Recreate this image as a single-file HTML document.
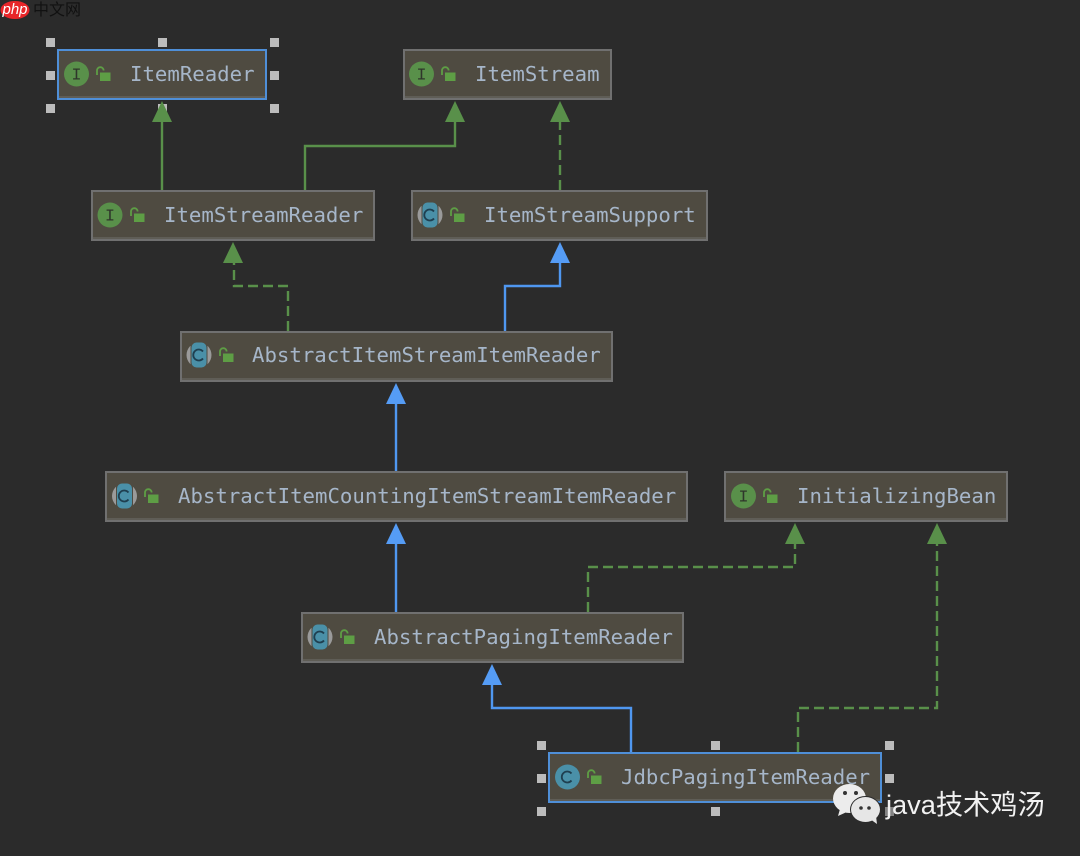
<!DOCTYPE html>
<html><head><meta charset="utf-8"><style>
html,body{margin:0;padding:0;background:#2b2b2b;width:1080px;height:856px;overflow:hidden}
svg{display:block}
.b{fill:#4f4b41;stroke:#707070;stroke-width:2}
.s{fill:#4f4b41;stroke:#4f8fd8;stroke-width:2}
.bb{fill:#5f5d56}
.t{font-family:"DejaVu Sans Mono","Liberation Mono",monospace;font-size:20.7px;fill:#a6b6c9}
.g{fill:none;stroke:#59904a;stroke-width:2.4}
.d{stroke-dasharray:10 5}
.l{fill:none;stroke:#4f97f0;stroke-width:2.4}
.h{fill:#bcbcbc}
.ic{font-family:"Liberation Mono",monospace;font-size:17px;fill:#2f362b;text-anchor:middle}
.main{filter:blur(.35px)}
</style></head><body>
<svg width="1080" height="856" viewBox="0 0 1080 856" xmlns="http://www.w3.org/2000/svg">
<defs>
<g id="I"><circle cx="0" cy="0" r="12.5" fill="#59904a"/><text class="ic" x="0" y="5.500">I</text></g>
<g id="C"><circle cx="0" cy="0" r="12.5" fill="#9a9a9a"/><rect x="-8.500" y="-13" width="17" height="26" fill="#4f4b41"/><rect x="-7.500" y="-12.500" width="15" height="25" rx="5" fill="#4a90a8"/><path d="M4 -3.500A5.500 5.500 0 1 0 4 3.500" fill="none" stroke="#1f3f50" stroke-width="1.800"/></g>
<g id="K"><circle cx="0" cy="0" r="12.5" fill="#4a90a8"/><path d="M4 -3.500A5.500 5.500 0 1 0 4 3.500" fill="none" stroke="#1f3f50" stroke-width="1.800"/></g>
<g id="L"><rect x="1" y="-1.500" width="10.500" height="8.500" fill="#5e9e45"/><path d="M-2 1V-3.500a3.300 3.300 0 0 1 6.600 0" fill="none" stroke="#5e9e45" stroke-width="1.800"/></g>
</defs>
<rect width="1080" height="856" fill="#2b2b2b"/>

<g class="main">
<!-- selection handles -->
<g class="h">
<rect x="46" y="38" width="9" height="9"/><rect x="158" y="38" width="9" height="9"/><rect x="270" y="38" width="9" height="9"/>
<rect x="46" y="71" width="9" height="9"/><rect x="270" y="71" width="9" height="9"/>
<rect x="46" y="104" width="9" height="9"/><rect x="158" y="104" width="9" height="9"/><rect x="270" y="104" width="9" height="9"/>
<rect x="537" y="741" width="9" height="9"/><rect x="711" y="741" width="9" height="9"/><rect x="885" y="741" width="9" height="9"/>
<rect x="537" y="774" width="9" height="9"/><rect x="885" y="774" width="9" height="9"/>
<rect x="537" y="807" width="9" height="9"/><rect x="711" y="807" width="9" height="9"/><rect x="885" y="807" width="9" height="9" opacity=".6"/>
</g>

<!-- connectors -->
<path class="g" d="M162 190V118"/>
<path class="g" d="M305 190V146H455V118"/>
<path class="g d" d="M560 190V118"/>
<path class="g d" d="M288 331V286H234V259"/>
<path class="l" d="M505 331V286H560V259"/>
<path class="l" d="M396 471V400"/>
<path class="l" d="M396 612V540"/>
<path class="g d" d="M588 612V567H795V540"/>
<path class="g d" d="M798 752V708H937V540"/>
<path class="l" d="M631 752V708H492V681"/>

<!-- arrows -->
<path d="M162 101L172 122H152Z" fill="#59904a"/>
<path d="M455 101L465 122H445Z" fill="#59904a"/>
<path d="M560 101L570 122H550Z" fill="#59904a"/>
<path d="M233 242L243 263H223Z" fill="#59904a"/>
<path d="M560 242L570 263H550Z" fill="#559cf5"/>
<path d="M396 383L406 404H386Z" fill="#559cf5"/>
<path d="M396 523L406 544H386Z" fill="#559cf5"/>
<path d="M795 523L805 544H785Z" fill="#59904a"/>
<path d="M937 523L947 544H927Z" fill="#59904a"/>
<path d="M492 664L502 685H482Z" fill="#559cf5"/>

<!-- boxes -->
<rect class="s" x="58" y="50" width="208" height="49"/>
<rect class="bb" x="59" y="96" width="206" height="2"/>
<use href="#I" x="76.500" y="74"/><use href="#L" x="99" y="74"/>
<text class="t" x="130" y="81">ItemReader</text>

<rect class="b" x="404" y="50" width="207" height="49"/>
<rect class="bb" x="405" y="96" width="205" height="2"/>
<use href="#I" x="421.500" y="74"/><use href="#L" x="444" y="74"/>
<text class="t" x="475" y="81">ItemStream</text>

<rect class="b" x="92" y="191" width="282" height="49"/>
<rect class="bb" x="93" y="237" width="280" height="2"/>
<use href="#I" x="110" y="215"/><use href="#L" x="133" y="215"/>
<text class="t" x="164" y="222">ItemStreamReader</text>

<rect class="b" x="412" y="191" width="295" height="49"/>
<rect class="bb" x="413" y="237" width="293" height="2"/>
<use href="#C" x="430" y="215"/><use href="#L" x="453" y="215"/>
<text class="t" x="484" y="222">ItemStreamSupport</text>

<rect class="b" x="181" y="332" width="431" height="49"/>
<rect class="bb" x="182" y="378" width="429" height="2"/>
<use href="#C" x="199" y="355"/><use href="#L" x="222" y="355"/>
<text class="t" x="252" y="362">AbstractItemStreamItemReader</text>

<rect class="b" x="106" y="472" width="581" height="49"/>
<rect class="bb" x="107" y="518" width="579" height="2"/>
<use href="#C" x="124.500" y="496"/><use href="#L" x="147" y="496"/>
<text class="t" x="178" y="503">AbstractItemCountingItemStreamItemReader</text>

<rect class="b" x="725" y="472" width="282" height="49"/>
<rect class="bb" x="726" y="518" width="280" height="2"/>
<use href="#I" x="743.500" y="496"/><use href="#L" x="766" y="496"/>
<text class="t" x="797" y="503">InitializingBean</text>

<rect class="b" x="302" y="613" width="381" height="49"/>
<rect class="bb" x="303" y="659" width="379" height="2"/>
<use href="#C" x="320" y="637"/><use href="#L" x="343" y="637"/>
<text class="t" x="374" y="644">AbstractPagingItemReader</text>

<rect class="s" x="549" y="753" width="332" height="49"/>
<rect class="bb" x="550" y="799" width="330" height="2"/>
<use href="#K" x="567.500" y="777"/><use href="#L" x="590" y="777"/>
<text class="t" x="621" y="784">JdbcPagingItemReader</text>
</g>

<!-- php logo -->
<ellipse cx="15" cy="10" rx="14.500" ry="9" fill="#e8262a"/>
<text x="15" y="14" text-anchor="middle" font-family="Liberation Sans,sans-serif" font-style="italic" font-size="15" fill="#fff">php</text>
<text x="33" y="15" font-family="'Liberation Sans','Noto Sans CJK SC',sans-serif" font-size="16" fill="#111">中文网</text>

<!-- wechat watermark -->
<ellipse cx="849.500" cy="798.500" rx="16.500" ry="14.500" fill="#ececec"/>
<path d="M840 809L838 816L849 811Z" fill="#ececec"/>
<ellipse cx="865.500" cy="809.500" rx="15.500" ry="13.500" fill="#2b2b2b"/>
<ellipse cx="865.500" cy="809.500" rx="14.500" ry="12.500" fill="#e6e6e6"/>
<path d="M870 819L877 824L876 816Z" fill="#e6e6e6"/>
<circle cx="845" cy="793" r="2" fill="#333"/><circle cx="856" cy="793" r="2" fill="#333"/>
<circle cx="861" cy="808" r="1.800" fill="#333"/><circle cx="869" cy="808" r="1.800" fill="#333"/>
<text x="886" y="814" font-family="'Liberation Sans','Noto Sans CJK SC',sans-serif" font-size="27.200" fill="#f2f2f2">java技术鸡汤</text>
</svg>
</body></html>
